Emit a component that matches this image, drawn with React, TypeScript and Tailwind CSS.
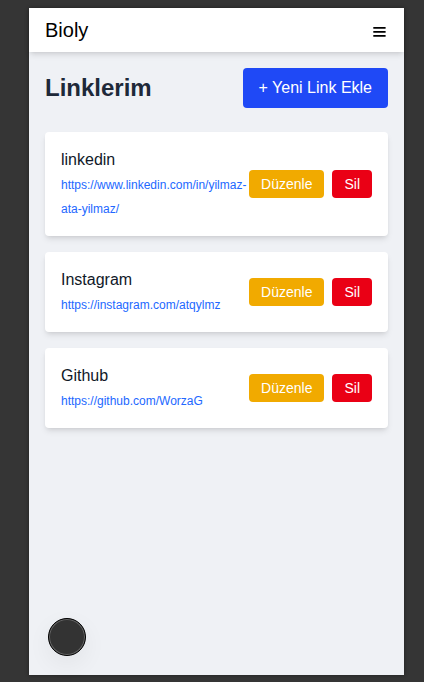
const links = [
  { title: "linkedin", url: "https://www.linkedin.com/in/yilmaz-ata-yilmaz/" },
  { title: "Instagram", url: "https://instagram.com/atqylmz" },
  { title: "Github", url: "https://github.com/WorzaG" },
];

function Header() {
  return (
    <header className="flex items-center justify-between bg-white px-4 py-2 shadow-md">
      <span className="text-xl text-black">Bioly</span>
      <button type="button" aria-label="Menü" className="flex size-5 items-center justify-center text-black">
        <svg viewBox="0 0 20 20" className="size-5" stroke="currentColor" strokeWidth="1.8" fill="none" aria-hidden="true">
          <path d="M5.3 7.8H17.6M5.3 11.8H17.6M5.3 15.8H17.6" />
        </svg>
      </button>
    </header>
  );
}

function LinkCard({ title, url }: { title: string; url: string }) {
  return (
    <li className="flex items-center justify-between rounded bg-white p-4 shadow-md">
      <div className="min-w-0">
        <h2 className="text-[#101828]">{title}</h2>
        <a href={url} className="text-xs text-[#2268ff]">
          {url}
        </a>
      </div>
      <div className="flex shrink-0 gap-2 text-sm text-white">
        <button type="button" className="rounded bg-[#f1aa00] px-3 py-1">
          Düzenle
        </button>
        <button type="button" className="rounded bg-[#ea0015] px-3 py-1">
          Sil
        </button>
      </div>
    </li>
  );
}

export default function App() {
  return (
    <div className="flex min-h-screen bg-[#353535] pt-2 pr-5 pb-[7px] pl-[29px] font-['Liberation_Sans',Arial,sans-serif]">
      <div className="relative flex min-w-0 flex-1 flex-col bg-[#eff1f5] shadow-[0_0_4px_rgba(0,0,0,0.4)]">
        <Header />
        <main className="p-4">
          <div className="mb-6 flex items-center justify-between">
            <h1 className="text-2xl font-bold text-[#1e2939]">Linklerim</h1>
            <button type="button" className="rounded bg-[#1f49f6] px-4 py-2 text-white">
              + Yeni Link Ekle
            </button>
          </div>
          <ul className="space-y-4">
            {links.map((link) => (
              <LinkCard key={link.title} {...link} />
            ))}
          </ul>
        </main>
        <button
          type="button"
          aria-label="Araçlar"
          className="absolute bottom-[19px] left-[19px] size-[38px] rounded-full border border-black bg-[#333333] shadow-[inset_0_0_0_1px_#666666,0_8px_24px_rgba(0,0,0,0.06)]"
        />
      </div>
    </div>
  );
}
